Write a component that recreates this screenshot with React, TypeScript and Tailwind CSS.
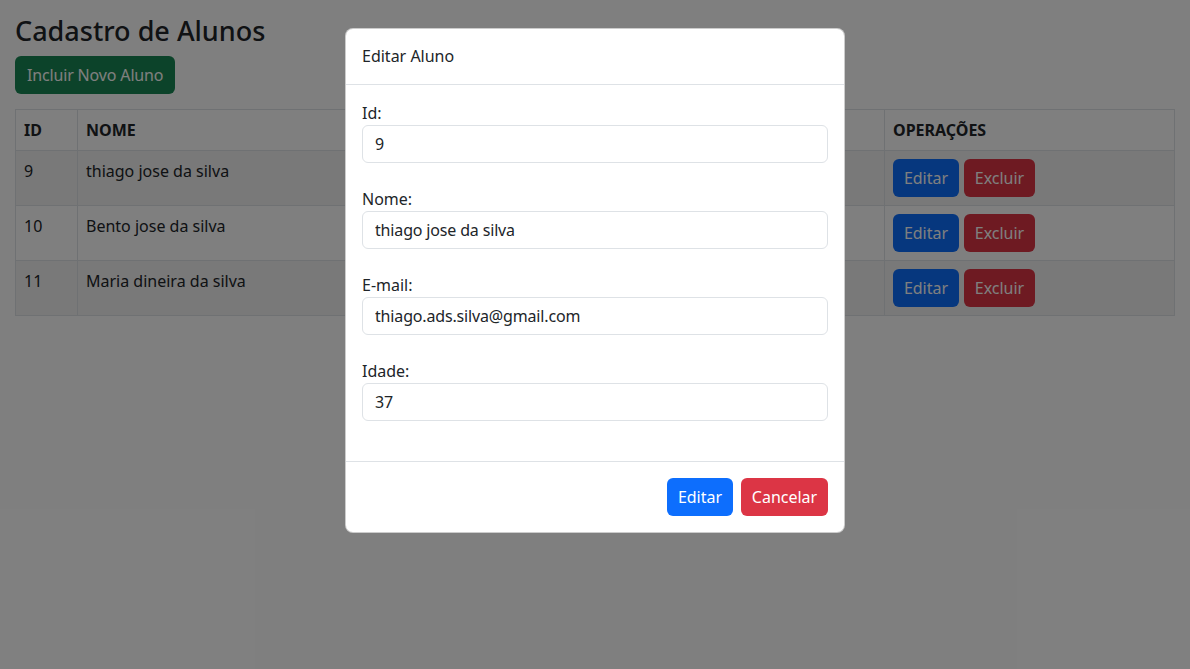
import { useState } from "react";

type Aluno = {
  id: number;
  nome: string;
  email: string;
  idade: number;
};

const alunos: Aluno[] = [
  { id: 9, nome: "thiago jose da silva", email: "thiago.ads.silva@gmail.com", idade: 37 },
  { id: 10, nome: "Bento jose da silva", email: "bento.silva@gmail.com", idade: 12 },
  { id: 11, nome: "Maria dineira da silva", email: "maria.silva@gmail.com", idade: 35 },
];

function Field({ label, value }: { label: string; value: string }) {
  return (
    <div className="flex flex-col pb-6">
      <label className="leading-6">{label}</label>
      <input
        readOnly
        value={value}
        className="h-[38px] w-full rounded-[6px] border border-[#dee2e6] px-3 text-base tracking-[-0.01em] text-[#212529] outline-none"
      />
    </div>
  );
}

export default function App() {
  const [selected] = useState<Aluno>(alunos[0]);

  return (
    <div className="relative min-h-[669px] bg-white font-['Noto_Sans',sans-serif] text-base text-[#212529]">
      <div className="px-[15px] pt-[14px]">
        <h3 className="mb-2 text-[27px] font-medium leading-[34px]">Cadastro de Alunos</h3>
        <button className="h-[38px] rounded-[6px] bg-[#198754] px-3 tracking-[-0.01em] text-white">Incluir Novo Aluno</button>

        <table className="mt-[15px] w-full border-collapse border border-[#dee2e6] text-left">
          <thead>
            <tr className="font-bold">
              <th className="w-[62px] border border-[#dee2e6] px-2 py-2 leading-6">ID</th>
              <th className="w-[350px] border border-[#dee2e6] px-2 py-2 leading-6">NOME</th>
              <th className="w-[330px] border border-[#dee2e6] px-2 py-2 leading-6">E-MAIL</th>
              <th className="w-[127px] border border-[#dee2e6] px-2 py-2 leading-6">IDADE</th>
              <th className="border border-[#dee2e6] px-2 py-2 leading-6">OPERAÇÕES</th>
            </tr>
          </thead>
          <tbody>
            {alunos.map((a, i) => (
              <tr key={a.id} className={i % 2 === 0 ? "bg-[#f2f2f2]" : "bg-white"}>
                <td className="border border-[#dee2e6] px-2 py-2 align-top leading-6">{a.id}</td>
                <td className="border border-[#dee2e6] px-2 py-2 align-top leading-6">{a.nome}</td>
                <td className="border border-[#dee2e6] px-2 py-2 align-top leading-6">{a.email}</td>
                <td className="border border-[#dee2e6] px-2 py-2 align-top leading-6">{a.idade}</td>
                <td className="border border-[#dee2e6] px-2 py-2 align-top">
                  <div className="flex gap-[5px]">
                    <button className="h-[38px] w-[66px] rounded-[6px] bg-[#0d6efd] text-white">Editar</button>
                    <button className="h-[38px] w-[71px] rounded-[6px] bg-[#dc3545] text-white">Excluir</button>
                  </div>
                </td>
              </tr>
            ))}
          </tbody>
        </table>
      </div>

      {/* backdrop + modal */}
      <div className="absolute inset-0 bg-black/50">
        <div className="mx-auto mt-[28px] w-[500px] rounded-[8px] border border-black/20 bg-white">
          <div className="border-b border-[#dee2e6] px-4 pb-4 pt-[15px] leading-6">Editar Aluno</div>
          <div className="p-4">
            <Field label="Id:" value={String(selected.id)} />
            <Field label="Nome:" value={selected.nome} />
            <Field label="E-mail:" value={selected.email} />
            <Field label="Idade:" value={String(selected.idade)} />
          </div>
          <div className="flex justify-end gap-2 border-t border-[#dee2e6] px-4 pb-4 pt-4">
            <button className="h-[38px] w-[66px] rounded-[6px] bg-[#0d6efd] text-white">Editar</button>
            <button className="h-[38px] w-[87px] rounded-[6px] bg-[#dc3545] text-white">Cancelar</button>
          </div>
        </div>
      </div>
    </div>
  );
}
